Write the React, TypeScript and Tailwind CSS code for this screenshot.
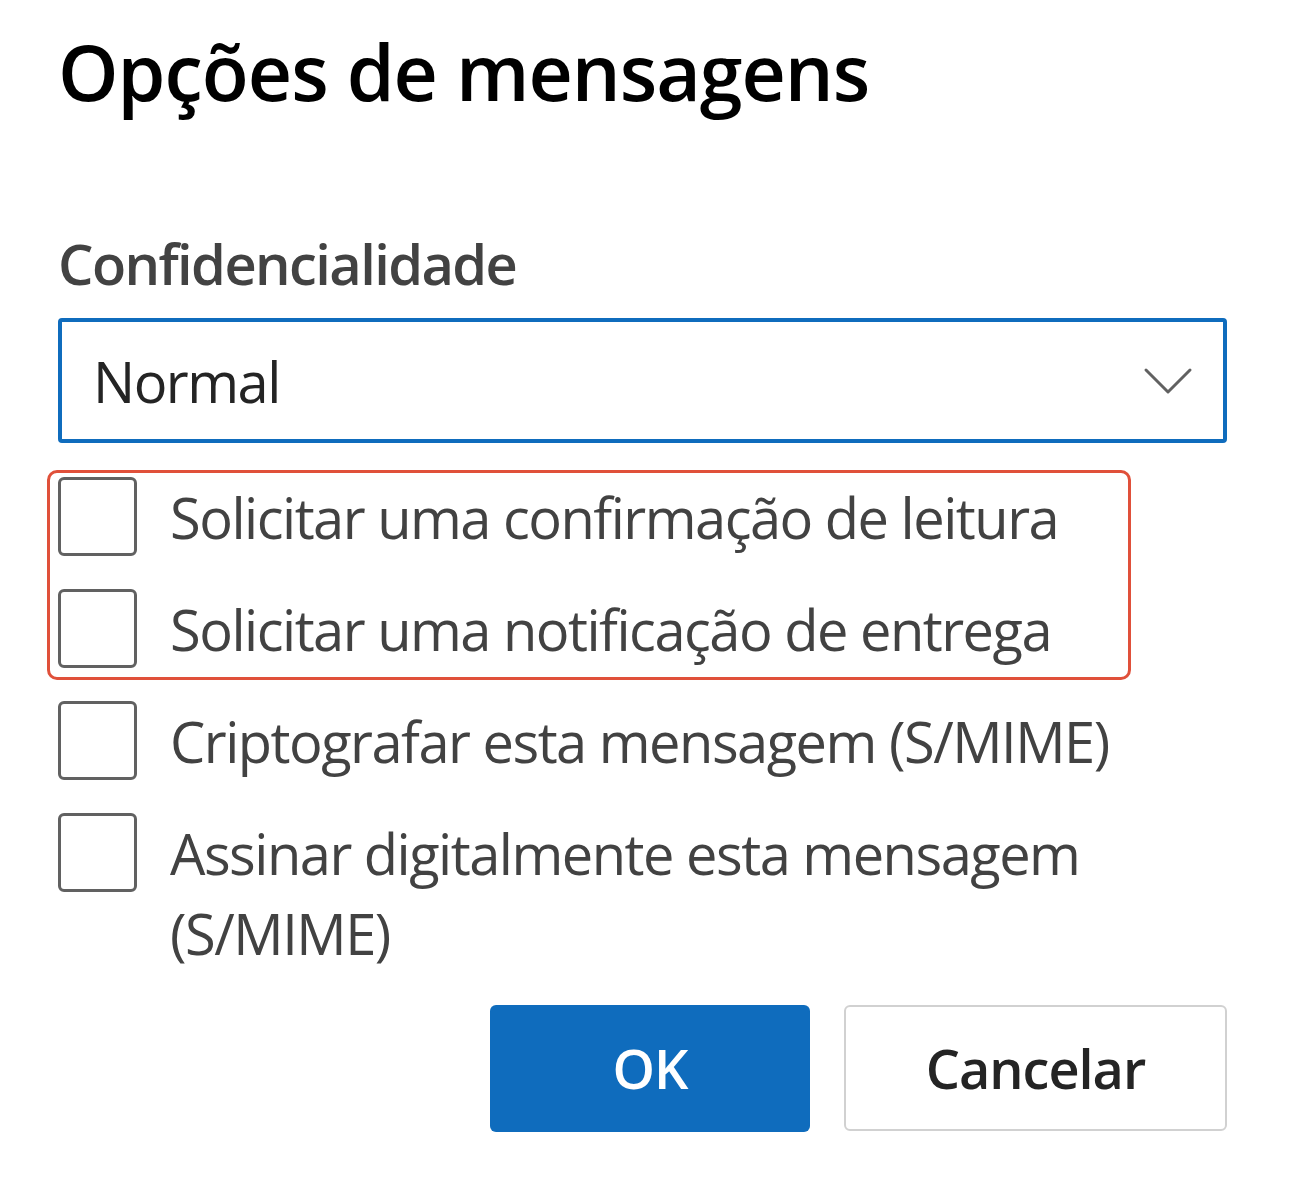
import React from 'react';

const FONT = { fontFamily: '"Open Sans", "Noto Sans", sans-serif' };

const OPTIONS = [
    { label: 'Solicitar uma confirmação de leitura', group: true },
    { label: 'Solicitar uma notificação de entrega', group: true },
    { label: 'Criptografar esta mensagem (S/MIME)', group: false },
    { label: 'Assinar digitalmente esta mensagem (S/MIME)', group: false },
];

const Check = ({ label }: { label: string }) => (
    <label className="flex items-start gap-[33px] cursor-pointer">
        <span className="w-[79px] h-[79px] shrink-0 rounded-[6px] border-[3px] border-[#616161] bg-white" />
        <span className="text-[56px] leading-[80px] text-[#424242] max-w-[990px] tracking-[-1.5px]">{label}</span>
    </label>
);

export default function App() {
    const grouped = OPTIONS.filter(o => o.group);
    const rest = OPTIONS.filter(o => !o.group);

    return (
        <div className="w-[1305px] h-[1195px] bg-white pl-[58px] pr-[78px] pt-[22px]" style={FONT}>
            {/* Title */}
            <h1 className="text-[77px] leading-[100px] font-semibold text-black tracking-[-1px]">Opções de mensagens</h1>

            {/* Sensitivity */}
            <p className="mt-[106px] text-[56px] leading-[70px] font-semibold text-[#424242] tracking-[-1.6px]">Confidencialidade</p>
            <div className="mt-[20px] h-[125px] rounded-[4px] border-[4px] border-[#0f6cbd] flex items-center justify-between pl-[31px] pr-[30px]">
                <span className="text-[56px] text-[#242424] tracking-[-1.5px]">Normal</span>
                <svg width="50" height="28" viewBox="0 0 50 28" fill="none">
                    <path d="M3 3 L25 25 L47 3" stroke="#616161" strokeWidth="3" strokeLinecap="round" strokeLinejoin="round" />
                </svg>
            </div>

            {/* Checkboxes */}
            <div className="mt-[34px] flex flex-col gap-[32px] relative">
                <div className="absolute left-[-11px] top-[-7px] w-[1084px] h-[210px] rounded-[10px] border-[3px] border-[#e0503a] pointer-events-none" />
                {grouped.map(o => <Check key={o.label} label={o.label} />)}
                {rest.map(o => <Check key={o.label} label={o.label} />)}
            </div>

            {/* Actions */}
            <div className="mt-[32px] flex justify-end gap-[34px]">
                <button className="w-[320px] h-[127px] rounded-[6px] bg-[#0f6cbd] text-white text-[54px] font-semibold tracking-[-1px]">OK</button>
                <button className="w-[383px] h-[126px] rounded-[6px] border-2 border-[#d1d1d1] bg-white text-[#242424] text-[54px] font-semibold tracking-[-1px]">Cancelar</button>
            </div>
        </div>
    );
}
